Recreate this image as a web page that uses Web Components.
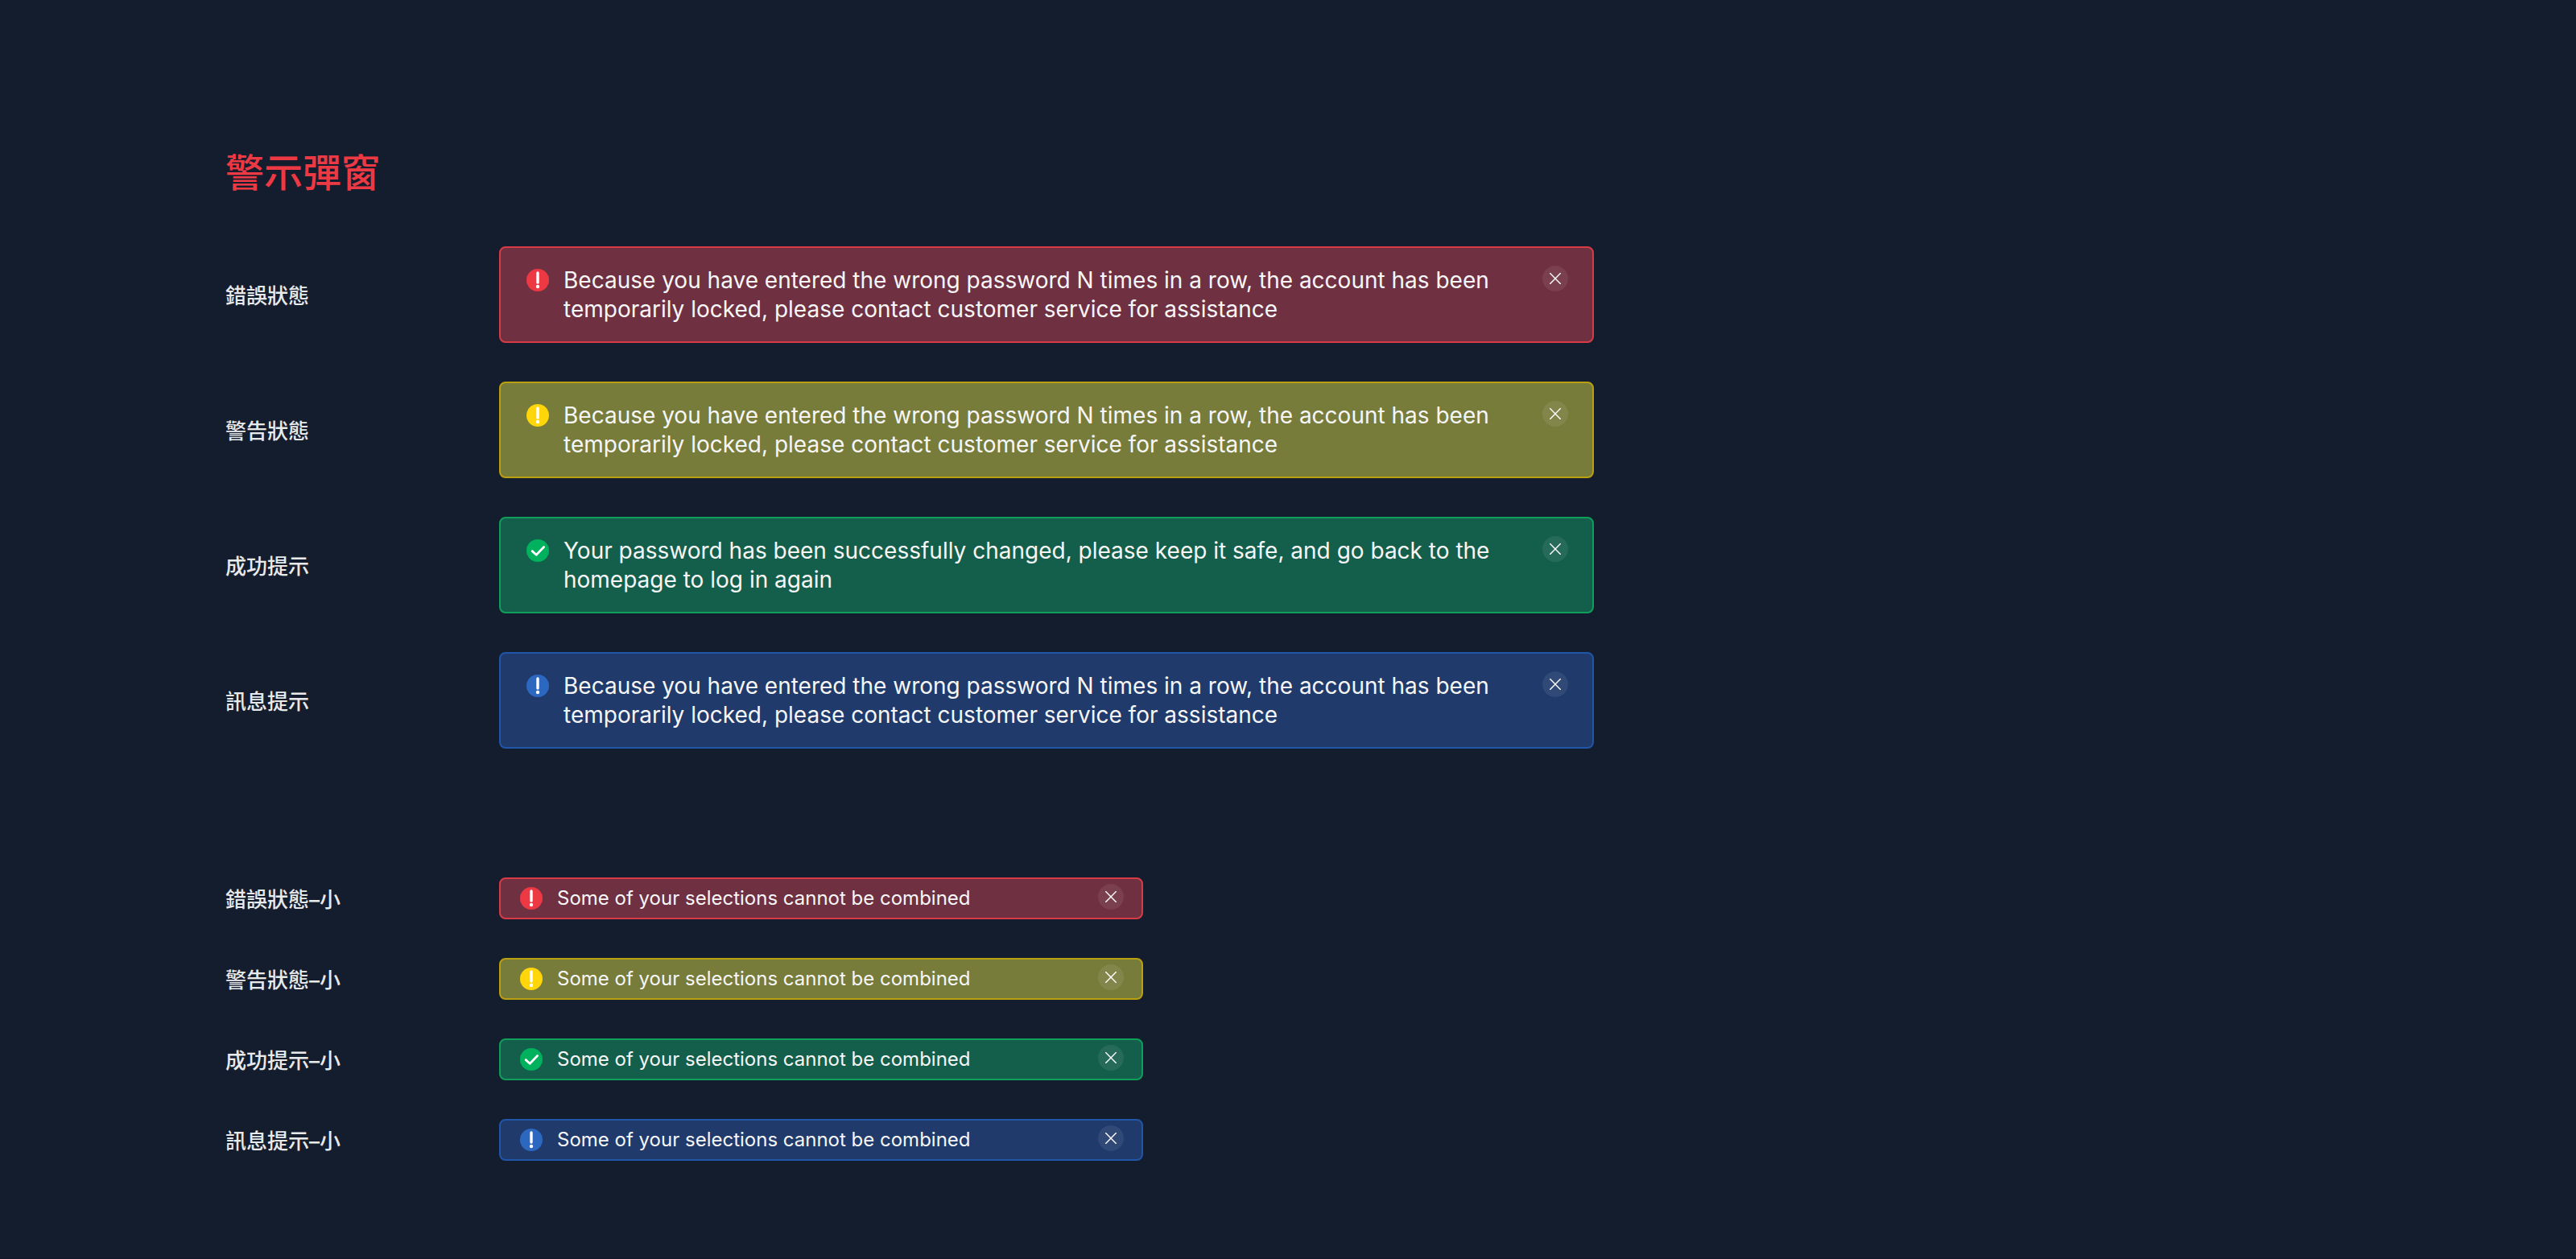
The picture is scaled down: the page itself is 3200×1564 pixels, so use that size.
<!DOCTYPE html>
<html lang="zh-Hant">
<head>
<meta charset="utf-8">
<title>警示彈窗</title>
<style>
  html { background: #141d2d; }
  body { margin: 0; min-height: 100vh; box-sizing: border-box; border-bottom: 2px solid #12192a; font-family: Inter, "Noto Sans CJK TC", sans-serif; }
</style>
</head>
<body>
<alert-board heading="警示彈窗">
  <alert-group>
    <alert-row label="錯誤狀態"><alert-box type="error">Because you have entered the wrong password N times in a row, the account has been temporarily locked, please contact customer service for assistance</alert-box></alert-row>
    <alert-row label="警告狀態"><alert-box type="warning">Because you have entered the wrong password N times in a row, the account has been temporarily locked, please contact customer service for assistance</alert-box></alert-row>
    <alert-row label="成功提示"><alert-box type="success">Your password has been successfully changed, please keep it safe, and go back to the homepage to log in again</alert-box></alert-row>
    <alert-row label="訊息提示"><alert-box type="info">Because you have entered the wrong password N times in a row, the account has been temporarily locked, please contact customer service for assistance</alert-box></alert-row>
  </alert-group>
  <alert-group>
    <alert-row label="錯誤狀態–小"><alert-box type="error" small>Some of your selections cannot be combined</alert-box></alert-row>
    <alert-row label="警告狀態–小"><alert-box type="warning" small>Some of your selections cannot be combined</alert-box></alert-row>
    <alert-row label="成功提示–小"><alert-box type="success" small>Some of your selections cannot be combined</alert-box></alert-row>
    <alert-row label="訊息提示–小"><alert-box type="info" small>Some of your selections cannot be combined</alert-box></alert-row>
  </alert-group>
</alert-board>
<script>
class BaseElement extends HTMLElement {
  render(html) {
    this.attachShadow({ mode: "open" }).innerHTML = html;
  }
}

customElements.define("alert-board", class extends BaseElement {
  connectedCallback() {
    this.render(`
      <style>
        :host { display: block; padding: 178px 280px 120px; }
        h1 { margin: 0 0 54px; font-size: 48px; line-height: 74px; font-weight: 500; color: #ed3944; }
        main { display: flex; flex-direction: column; gap: 160px; }
      </style>
      <h1>${this.getAttribute("heading")}</h1>
      <main><slot></slot></main>`);
  }
});

customElements.define("alert-group", class extends BaseElement {
  connectedCallback() {
    this.render(`
      <style>:host { display: flex; flex-direction: column; gap: 48px; }</style>
      <slot></slot>`);
  }
});

customElements.define("alert-row", class extends BaseElement {
  connectedCallback() {
    this.render(`
      <style>
        :host { display: flex; align-items: center; }
        h2 { margin: 0; padding-top: 4px; flex: 0 0 340px; font-size: 26px; line-height: 36px; font-weight: 500; color: #e8e9eb; }
      </style>
      <h2>${this.getAttribute("label")}</h2>
      <slot></slot>`);
  }
});

const MARK = `<path d="M14 5V17" stroke="#fff" stroke-width="3.4" stroke-linecap="round"/><circle cx="14" cy="22" r="2.2" fill="#fff"/>`;
const CHECK = `<path d="M7.2 14.6L12.2 19.2L21.6 9.6" stroke="#fff" stroke-width="2.8" stroke-linecap="round" stroke-linejoin="round"/>`;
const TYPES = {
  error:   { icon: "#ed3944", line: "#d93b46", fill: "#6f3042", glyph: MARK },
  warning: { icon: "#ffd60a", line: "#baa00f", fill: "#787c3b", glyph: MARK },
  success: { icon: "#00b15d", line: "#0f9f5a", fill: "#145f4b", glyph: CHECK },
  info:    { icon: "#2d68c0", line: "#1f56a8", fill: "#1f3a6b", glyph: MARK }
};

customElements.define("alert-box", class extends BaseElement {
  connectedCallback() {
    const t = TYPES[this.getAttribute("type")];
    this.render(`
      <style>
        :host {
          display: flex; align-items: flex-start; box-sizing: border-box;
          flex: 0 1 1360px; padding: 22px 30px; border: 2px solid ${t.line};
          border-radius: 8px; background: ${t.fill}; color: #f6f6f7;
          font-size: 28px; line-height: 36px; font-weight: 400;
        }
        :host([small]) { flex-basis: 800px; padding: 6px 22px; font-size: 24px; }
        svg { display: block; flex: none; }
        .icon { margin: 4px 18px 0 2px; }
        p { flex: 1 1 0; margin: 0; }
        button {
          flex: none; display: grid; place-items: center; width: 32px; height: 32px;
          margin-left: 48px; padding: 0; border: 0; border-radius: 50%;
          background: rgb(255 255 255 / 0.08); color: #fff; cursor: pointer;
        }
      </style>
      <svg class="icon" width="28" height="28" viewBox="0 0 28 28" fill="none" aria-hidden="true">
        <circle cx="14" cy="14" r="14" fill="${t.icon}"/>${t.glyph}
      </svg>
      <p><slot></slot></p>
      <button type="button" aria-label="關閉">
        <svg width="14" height="14" viewBox="0 0 14 14" fill="none" stroke="currentColor" stroke-width="1.4" stroke-linecap="round"><path d="M.6 .6L13.4 13.4M13.4 .6L.6 13.4"/></svg>
      </button>`);
  }
});
</script>
</body>
</html>
